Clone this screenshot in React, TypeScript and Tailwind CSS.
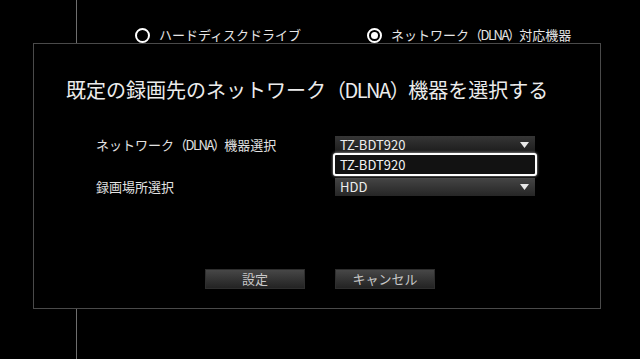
import React from "react";

// TV menu: choose default DLNA recording destination
const Arrow = () => (
    <svg width="9" height="6" viewBox="0 0 9 6" className="mr-[6px]">
        <polygon points="0,0 9,0 4.5,6" fill="#e8e8e8" />
    </svg>
);

// the set's font draws the latin part narrow
const Dlna = () => <span className="tracking-[-1.5px]">（DLNA）</span>;

function Radio({ checked, children }: { checked?: boolean; children: React.ReactNode }) {
    return (
        <div className="flex items-center h-[16px]">
            {checked ? (
                <div className="w-[15px] h-[15px] rounded-full border-2 border-white flex items-center justify-center">
                    <div className="w-[7px] h-[7px] rounded-full bg-white" />
                </div>
            ) : (
                <div className="w-[15px] h-[15px] rounded-full border-2 border-white" />
            )}
            <span className="ml-[9px] text-[13px] leading-[16px] text-[#e6e6e6]">{children}</span>
        </div>
    );
}

export default function App() {
    return (
        <div className="w-[640px] h-[359px] bg-black flex flex-col overflow-hidden font-['Noto_Sans_CJK_JP',sans-serif]">
            {/* background: side line + radio row */}
            <div className="h-[43px] flex items-end shrink-0">
                <div className="ml-[76px] w-px self-stretch bg-[#6e6e6e]" />
                <div className="ml-[58px] w-[232px]">
                    <Radio>ハードディスクドライブ</Radio>
                </div>
                <div>
                    <Radio checked>
                        ネットワーク<Dlna />対応機器
                    </Radio>
                </div>
            </div>

            {/* dialog */}
            <div className="ml-[33px] w-[568px] h-[266px] shrink-0 border border-[#4a4a4a] flex flex-col">
                <div className="pt-[32px] pl-[32px] text-[20px] leading-[28px] text-[#ececec]">
                    既定の録画先のネットワーク<Dlna />機器を選択する
                </div>

                <div className="mt-[32px] pl-[62px] grid grid-cols-[239px_200px] gap-y-[25px] items-center text-[13px]">
                    <div className="leading-[17px] text-[#e2e2e2]">
                        ネットワーク<Dlna />機器選択
                    </div>
                    <div className="relative h-[17px] bg-linear-to-b from-[#363636] to-[#1c1c1c] flex items-center justify-between">
                        <span className="pl-[5px] leading-[17px] text-[#eeeeee]">TZ-BDT920</span>
                        <Arrow />
                        <div className="absolute top-full left-[-2px] right-[-2px] h-[23px] border-2 border-white rounded-[3px] bg-[#121212] shadow-[0_0_3px_rgba(255,255,255,0.7)] flex items-center">
                            <span className="pl-[5px] text-[#f2f2f2] leading-[17px]">TZ-BDT920</span>
                        </div>
                    </div>

                    <div className="leading-[18px] text-[#e2e2e2]">録画場所選択</div>
                    <div className="h-[18px] bg-linear-to-b from-[#454545] to-[#262626] flex items-center justify-between">
                        <span className="pl-[5px] leading-[18px] text-[#eeeeee]">HDD</span>
                        <Arrow />
                    </div>
                </div>

                <div className="mt-[73px] pl-[171px] flex gap-[30px] text-[13px]">
                    <div className="w-[100px] h-[20px] bg-linear-to-b from-[#474747] to-[#232323] border border-[#2e2e2e] flex items-center justify-center text-[#c8c8c8] leading-[18px]">
                        設定
                    </div>
                    <div className="w-[100px] h-[20px] bg-linear-to-b from-[#474747] to-[#232323] border border-[#2e2e2e] flex items-center justify-center text-[#c8c8c8] leading-[18px]">
                        キャンセル
                    </div>
                </div>
            </div>

            <div className="flex-1 flex">
                <div className="ml-[76px] w-px bg-[#6e6e6e]" />
            </div>
        </div>
    );
}
